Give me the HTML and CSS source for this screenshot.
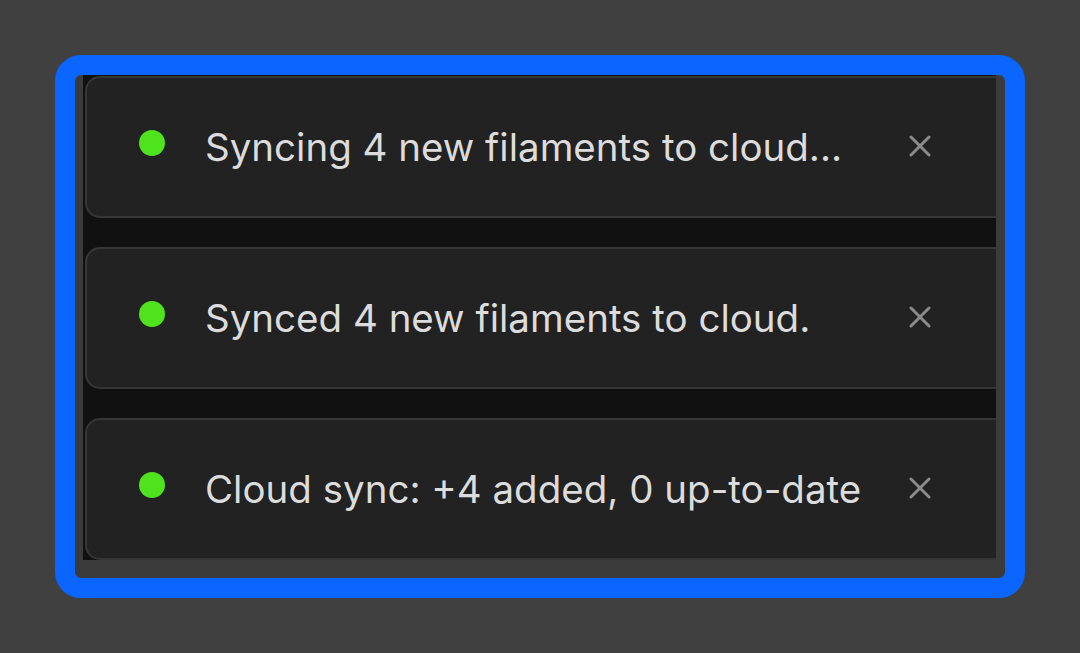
FILE: index.html
```html
<!DOCTYPE html>
<html>
<head>
<meta charset="utf-8">
<link rel="stylesheet" href="styles.css">
</head>
<body>
<div class="frame">
  <div class="list">
    <div class="card">
      <span class="dot"></span>
      <span class="msg">Syncing 4 new filaments to cloud...</span>
      <svg class="close" width="22" height="22" viewBox="0 0 22 22"><path d="M2 2 L20 20 M20 2 L2 20" stroke="#8b8b8b" stroke-width="3" stroke-linecap="round"/></svg>
    </div>
    <div class="card">
      <span class="dot"></span>
      <span class="msg">Synced 4 new filaments to cloud.</span>
      <svg class="close" width="22" height="22" viewBox="0 0 22 22"><path d="M2 2 L20 20 M20 2 L2 20" stroke="#8b8b8b" stroke-width="3" stroke-linecap="round"/></svg>
    </div>
    <div class="card">
      <span class="dot"></span>
      <span class="msg">Cloud sync: +4 added, 0 up-to-date</span>
      <svg class="close" width="22" height="22" viewBox="0 0 22 22"><path d="M2 2 L20 20 M20 2 L2 20" stroke="#8b8b8b" stroke-width="3" stroke-linecap="round"/></svg>
    </div>
  </div>
</div>
</body>
</html>
```
FILE: styles.css
```css
* { box-sizing: border-box; }
html, body { margin: 0; padding: 0; }
body {
  width: 1080px;
  height: 653px;
  background: #404040;
  overflow: hidden;
  font-family: Inter, "Noto Sans", "Liberation Sans", sans-serif;
}
.frame {
  margin: 55px 0 0 55px;
  width: 970px;
  height: 543px;
  border: 20px solid #0a66ff;
  border-radius: 26px;
  background: #3b3b3b;
  padding: 0 9px 18px 8px;
}
.list {
  height: 100%;
  background: #111111;
  overflow: hidden;
  display: flex;
  flex-direction: column;
  gap: 29px;
  padding: 1px 0 0 2px;
}
.card {
  flex: none;
  width: 960px;
  height: 142px;
  background: #222222;
  border: 2px solid #363636;
  border-radius: 15px;
  display: flex;
  align-items: center;
  padding-left: 52px;
}
.dot {
  flex: none;
  width: 26px;
  height: 26px;
  border-radius: 50%;
  background: #4fe31e;
  margin-bottom: 9px;
}
.msg {
  flex: none;
  width: 744px;
  padding-left: 40px;
  color: #dcdcdc;
  font-size: 38.5px;
  line-height: 46px;
  white-space: nowrap;
}
.close {
  flex: none;
  margin-bottom: 3px;
}
```
